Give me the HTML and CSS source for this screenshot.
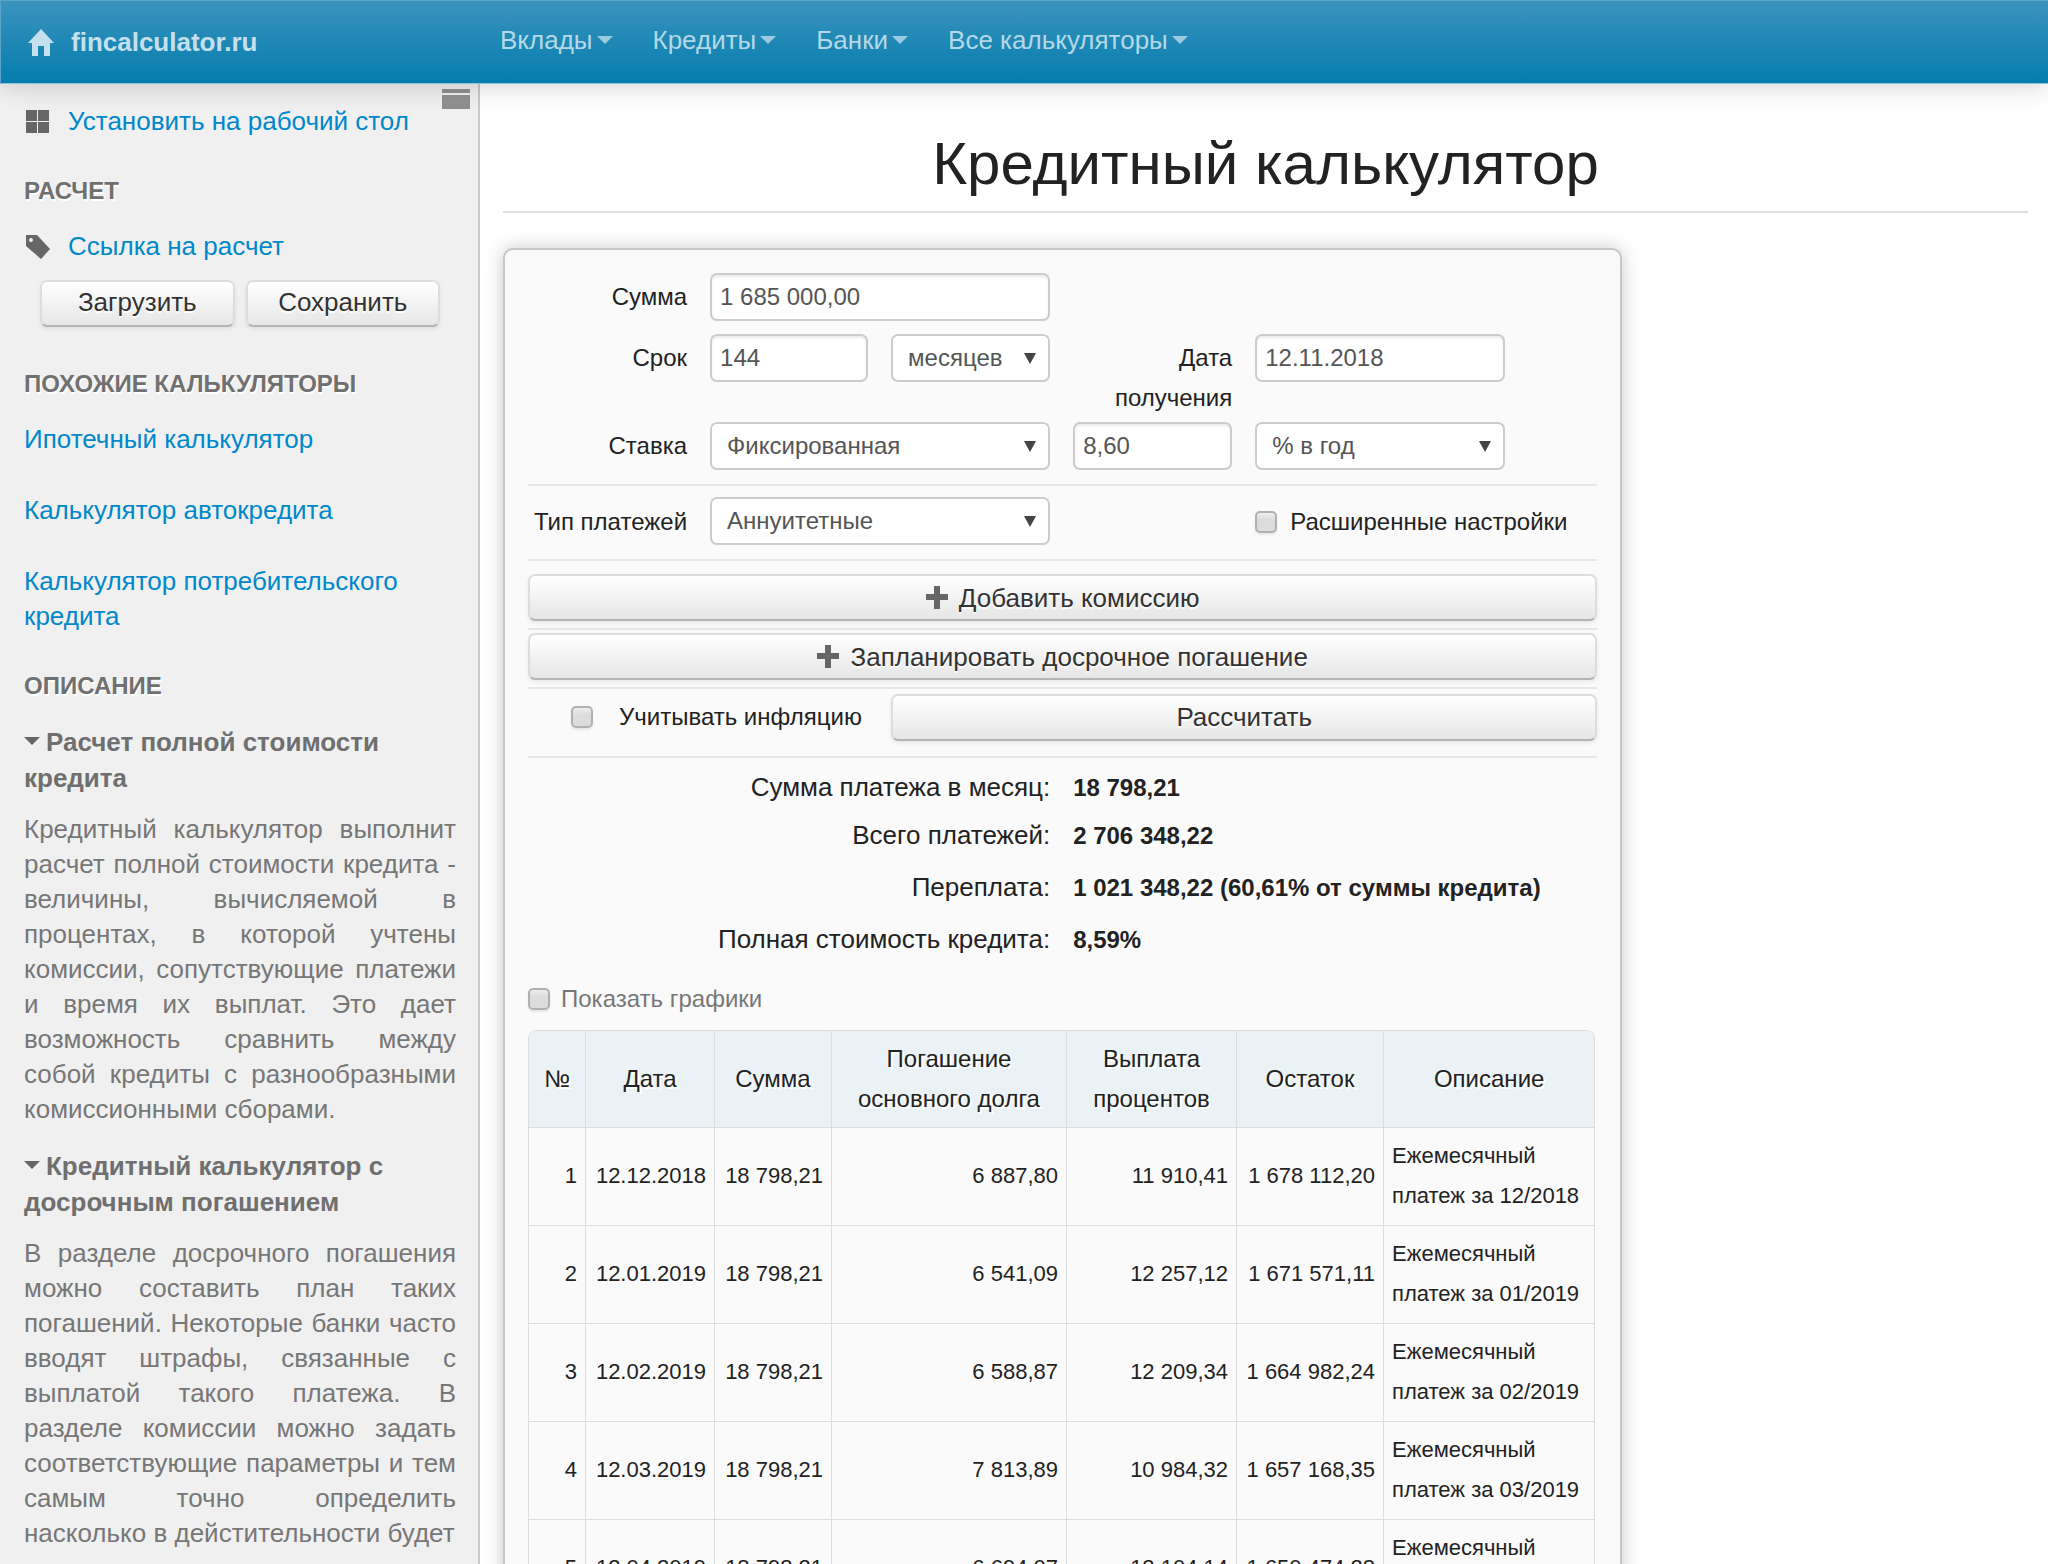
FILE: index.html
```html
<!DOCTYPE html>
<html lang="ru">
<head>
<meta charset="utf-8">
<title>Кредитный калькулятор</title>
<meta name="viewport" content="width=device-width, initial-scale=1">
<link rel="stylesheet" href="styles.css">
</head>
<body>
<header class="navbar">
  <a class="brand" href="#">
    <svg class="brand-icon" viewBox="0 0 26 27" width="26" height="27" aria-hidden="true"><path fill="currentColor" d="M13 0 26 14H22V27H16V17H10V27H4V14H0Z"/></svg>
    <span>fincalculator.ru</span>
  </a>
  <nav class="menu">
    <a class="menu-item" href="#">Вклады</a>
    <a class="menu-item" href="#">Кредиты</a>
    <a class="menu-item" href="#">Банки</a>
    <a class="menu-item" href="#">Все калькуляторы</a>
  </nav>
</header>
<div class="layout">
  <aside class="sidebar">
    <button class="collapse" type="button" aria-label="Свернуть панель">
      <svg viewBox="0 0 28 20" width="28" height="20"><path fill="#909090" d="M0 0H28V4H0ZM0 6H28V20H0Z"/></svg>
    </button>
    <a class="side-link with-icon" href="#">
      <svg class="side-icon" viewBox="0 0 24 24" width="24" height="24" aria-hidden="true"><path fill="#666" d="M0 0H11V11H0ZM12 0H23V11H12ZM0 12H11V23H0ZM12 12H23V23H12Z"/></svg>
      Установить на рабочий стол
    </a>
    <h2 class="side-title">Расчет</h2>
    <a class="side-link with-icon" href="#">
      <svg class="side-icon" viewBox="0 0 24 24" width="24" height="24" aria-hidden="true"><path fill="#666" fill-rule="evenodd" d="M0 0H11L24 14 15 24 0 11ZM5 3A2 2 0 0 0 5 7 2 2 0 0 0 5 3Z"/></svg>
      Ссылка на расчет
    </a>
    <div class="side-buttons">
      <button class="btn" type="button">Загрузить</button>
      <button class="btn" type="button">Сохранить</button>
    </div>
    <h2 class="side-title after-buttons">Похожие калькуляторы</h2>
    <ul class="similar">
      <li><a class="side-link" href="#">Ипотечный калькулятор</a></li>
      <li><a class="side-link" href="#">Калькулятор автокредита</a></li>
      <li><a class="side-link" href="#">Калькулятор потребительского кредита</a></li>
    </ul>
    <h2 class="side-title">Описание</h2>
    <section class="about">
      <h3><svg class="fold" viewBox="0 0 16 9" width="16" height="9" aria-hidden="true"><path fill="#666" d="M0 0H16L8 8Z"/></svg>Расчет полной стоимости кредита</h3>
      <p>Кредитный калькулятор выполнит расчет полной стоимости кредита - величины, вычисляемой в процентах, в которой учтены комиссии, сопутствующие платежи и время их выплат. Это дает возможность сравнить между собой кредиты с разнообразными комиссионными сборами.</p>
    </section>
    <section class="about">
      <h3><svg class="fold" viewBox="0 0 16 9" width="16" height="9" aria-hidden="true"><path fill="#666" d="M0 0H16L8 8Z"/></svg>Кредитный калькулятор с досрочным погашением</h3>
      <p>В разделе досрочного погашения можно составить план таких погашений. Некоторые банки часто вводят штрафы, связанные с выплатой такого платежа. В разделе комиссии можно задать соответствующие параметры и тем самым точно определить насколько в дейстительности будет</p>
    </section>
  </aside>
  <main class="content">
    <h1>Кредитный калькулятор</h1>
    <form class="calc">
      <div class="row">
        <label class="lbl" for="amount">Сумма</label>
        <input class="ctl wide" id="amount" type="text" value="1 685 000,00">
      </div>
      <div class="row">
        <label class="lbl" for="term">Срок</label>
        <input class="ctl" id="term" type="text" value="144">
        <select class="ctl" aria-label="Единица срока"><option>месяцев</option></select>
        <label class="lbl" for="date">Дата получения</label>
        <input class="ctl" id="date" type="text" value="12.11.2018">
      </div>
      <div class="row">
        <label class="lbl" for="ratetype">Ставка</label>
        <select class="ctl wide" id="ratetype"><option>Фиксированная</option></select>
        <input class="ctl" type="text" value="8,60" aria-label="Ставка">
        <select class="ctl" aria-label="Период ставки"><option>% в год</option></select>
      </div>
      <div class="row ruled pay">
        <label class="lbl" for="paytype">Тип платежей</label>
        <select class="ctl wide" id="paytype"><option>Аннуитетные</option></select>
        <label class="check advanced"><input type="checkbox">Расширенные настройки</label>
      </div>
      <div class="ruled first-action">
        <button class="btn block" type="button"><svg viewBox="0 0 22 23" width="22" height="23" aria-hidden="true"><path fill="#666" d="M8 0H14V8H22V14H14V23H8V14H0V8H8Z"/></svg>Добавить комиссию</button>
      </div>
      <div class="ruled action">
        <button class="btn block" type="button"><svg viewBox="0 0 22 23" width="22" height="23" aria-hidden="true"><path fill="#666" d="M8 0H14V8H22V14H14V23H8V14H0V8H8Z"/></svg>Запланировать досрочное погашение</button>
      </div>
      <div class="row ruled submit">
        <label class="check inflation"><input type="checkbox">Учитывать инфляцию</label>
        <button class="btn calculate" type="button">Рассчитать</button>
      </div>
      <dl class="results ruled">
        <div class="row"><dt>Сумма платежа в месяц:</dt><dd>18 798,21</dd></div>
        <div class="row"><dt>Всего платежей:</dt><dd>2 706 348,22</dd></div>
        <div class="row"><dt>Переплата:</dt><dd>1 021 348,22 (60,61% от суммы кредита)</dd></div>
        <div class="row"><dt>Полная стоимость кредита:</dt><dd>8,59%</dd></div>
      </dl>
      <label class="check charts"><input type="checkbox">Показать графики</label>
      <table class="schedule">
        <colgroup><col class="c-num"><col class="c-date"><col class="c-sum"><col class="c-main"><col class="c-int"><col class="c-rest"><col></colgroup>
        <thead>
          <tr><th>№</th><th>Дата</th><th>Сумма</th><th>Погашение основного долга</th><th>Выплата процентов</th><th>Остаток</th><th>Описание</th></tr>
        </thead>
        <tbody>
          <tr><td>1</td><td>12.12.2018</td><td>18 798,21</td><td>6 887,80</td><td>11 910,41</td><td>1 678 112,20</td><td>Ежемесячный платеж за 12/2018</td></tr>
          <tr><td>2</td><td>12.01.2019</td><td>18 798,21</td><td>6 541,09</td><td>12 257,12</td><td>1 671 571,11</td><td>Ежемесячный платеж за 01/2019</td></tr>
          <tr><td>3</td><td>12.02.2019</td><td>18 798,21</td><td>6 588,87</td><td>12 209,34</td><td>1 664 982,24</td><td>Ежемесячный платеж за 02/2019</td></tr>
          <tr><td>4</td><td>12.03.2019</td><td>18 798,21</td><td>7 813,89</td><td>10 984,32</td><td>1 657 168,35</td><td>Ежемесячный платеж за 03/2019</td></tr>
          <tr><td>5</td><td>12.04.2019</td><td>18 798,21</td><td>6 694,07</td><td>12 104,14</td><td>1 650 474,28</td><td>Ежемесячный платеж за 04/2019</td></tr>
        </tbody>
      </table>
    </form>
  </main>
</div>
</body>
</html>
```

FILE: styles.css
```css
:root {
  --sidebar: 480px;
  --line: #e6e6e6;
  --link: #0088cc;
}

* { box-sizing: border-box; }

body {
  margin: 0;
  height: 100vh;
  display: flex;
  flex-direction: column;
  overflow: hidden;
  background: #fff;
  color: #222;
  font-family: "Liberation Sans", Arial, sans-serif;
  font-size: 24px;
  line-height: 40px;
}

a { text-decoration: none; }
h1, h2, h3, p, ul, dl, dd { margin: 0; }
button, input, select { font: inherit; margin: 0; }

/* Top bar */
.navbar {
  position: relative;
  z-index: 2;
  flex: none;
  display: flex;
  height: 84px;
  border: 1px solid #58a5c8;
  border-bottom-color: #8fc3da;
  border-right: 0;
  background: linear-gradient(#3a93bc, #047dae);
  box-shadow: 0 0 26px rgba(0, 0, 0, 0.2);
  font-size: 26px;
}

.brand {
  display: flex;
  align-items: center;
  gap: 17px;
  width: var(--sidebar);
  padding-left: 27px;
  color: #c4e0ec;
  font-weight: bold;
}

.menu {
  display: flex;
  align-items: center;
  gap: 40px;
  padding: 0 0 4px 19px;
}

.menu-item {
  display: flex;
  align-items: center;
  gap: 4px;
  color: #b4d8e7;
}

.menu-item::after {
  content: "";
  border: 8px solid transparent;
  border-top-color: #9bcbe0;
  border-bottom: 0;
}

.layout {
  flex: 1;
  min-height: 0;
  display: flex;
}

/* Sidebar */
.sidebar {
  position: relative;
  flex: none;
  width: var(--sidebar);
  padding: 20px 22px 0 24px;
  overflow: hidden;
  border-right: 2px solid #c8c8c8;
  background: #f0f0f0;
  color: #777;
  line-height: 35px;
}

.collapse {
  position: absolute;
  top: 5px;
  right: 8px;
  display: flex;
  padding: 0;
  border: 0;
  background: none;
}

.side-link {
  color: var(--link);
  font-size: 26px;
}

.with-icon {
  display: flex;
  align-items: center;
  gap: 18px;
  padding-left: 2px;
}

.side-title {
  margin: 34px 0 21px;
  color: #707070;
  font-size: 24px;
  text-transform: uppercase;
  text-shadow: 1px 2px 0 #fff;
}

.side-title.after-buttons { margin-top: 39px; }

.side-buttons {
  display: flex;
  gap: 11px;
  padding: 16px 16px 0;
}

.side-buttons .btn { flex: 1; }

.similar {
  display: flex;
  flex-direction: column;
  gap: 36px;
  padding: 0;
  list-style: none;
}

.similar .side-link { display: block; }

.about h3 {
  color: #6f6f6f;
  font-size: 26px;
  line-height: 36px;
}

.about p {
  margin: 16px 0 21px;
  font-size: 26px;
  text-align: justify;
}

.fold {
  margin-right: 6px;
  vertical-align: 5px;
}

/* Main area */
.content {
  flex: 1;
  min-width: 0;
  padding: 40px 20px 0 23px;
  overflow: hidden;
}

h1 {
  padding-bottom: 7px;
  border-bottom: 2px solid #e0e0e0;
  font-size: 60px;
  font-weight: normal;
  line-height: 80px;
  text-align: center;
}

.calc {
  width: 73.4%;
  margin-top: 35px;
  padding: 23px 23px 24px;
  border: 2px solid #c8c8c8;
  border-radius: 10px;
  background: #fafafa;
  box-shadow: 0 0 18px rgba(0, 0, 0, 0.22);
}

.row {
  display: grid;
  grid-template-columns: 159fr 158fr 159fr 159fr 250fr 69fr;
  column-gap: 23px;
  align-items: start;
}

.lbl {
  padding-top: 4px;
  margin-bottom: 4px;
  text-align: right;
}

.ctl {
  width: 100%;
  height: 48px;
  margin-bottom: 13px;
  padding: 0 8px 1px;
  border: 2px solid #ccc;
  border-radius: 7px;
  outline: 0;
  background: #fff;
  box-shadow: inset 0 2px 2px rgba(0, 0, 0, 0.08);
  color: #555;
}

select.ctl {
  appearance: none;
  padding-left: 15px;
  background: #fff url("data:image/svg+xml,%3Csvg xmlns='http://www.w3.org/2000/svg' width='12' height='11'%3E%3Cpath fill='%23444' d='M0 0H12L6 11Z'/%3E%3C/svg%3E") no-repeat right 12px center;
  box-shadow: none;
}

.wide { grid-column: span 2; }

.ruled { border-top: 2px solid var(--line); }

.pay {
  margin-top: 1px;
  padding: 11px 0 1px;
}

.check {
  display: flex;
  align-items: center;
}

.check input {
  appearance: none;
  flex: none;
  width: 22px;
  height: 22px;
  border: 2px solid #b0b0b0;
  border-radius: 5px;
  background: linear-gradient(#eee, #dcdcdc 40%);
  box-shadow: 0 2px 2px rgba(0, 0, 0, 0.08);
}

.advanced {
  grid-column: 5 / -1;
  gap: 13px;
}

.pay .lbl,
.advanced { padding-top: 5px; }

.btn {
  display: flex;
  align-items: center;
  justify-content: center;
  gap: 11px;
  height: 47px;
  padding: 0 0 2px;
  border: 2px solid #ddd;
  border-bottom-color: #b4b4b4;
  border-radius: 7px;
  background: linear-gradient(#fff, #e6e6e6);
  box-shadow: 0 2px 4px rgba(0, 0, 0, 0.08);
  color: #333;
  font-size: 26px;
  text-shadow: 0 2px 1px #fff;
}

.block {
  width: 100%;
  padding: 0;
}

.first-action { padding: 13px 0 7px; }
.action { padding: 3px 0 7px; }

.submit { padding: 5px 0 15px; }

.inflation {
  grid-column: span 2;
  gap: 26px;
  padding: 3px 0 0 43px;
}

.calculate { grid-column: 3 / -1; }

.results { padding-top: 9px; }

.results .row {
  height: 52px;
  align-items: baseline;
}

.results .row:first-child { height: 48px; }

dt {
  grid-column: span 3;
  font-size: 26px;
  text-align: right;
}

dd {
  grid-column: span 3;
  font-weight: bold;
}

.charts {
  gap: 11px;
  margin: 8px 0 11px;
  color: #777;
}

/* Payment schedule */
.schedule {
  width: calc(100% - 2px);
  table-layout: fixed;
  border-spacing: 0;
  border: 1px solid #ddd;
  border-radius: 8px 8px 0 0;
  overflow: hidden;
  font-size: 22px;
}

.c-num { width: 56px; }
.c-date { width: 129px; }
.c-sum { width: 117px; }
.c-main { width: 235px; }
.c-int { width: 170px; }
.c-rest { width: 147px; }

.schedule th {
  padding: 8px;
  background: #eaf2f6;
  font-size: 24px;
  font-weight: normal;
  text-shadow: 2px 2px 0 #fff;
}

.schedule td {
  padding: 8px 8px 9px;
  border-top: 1px solid #ddd;
  text-align: right;
}

.schedule th + th,
.schedule td + td { border-left: 1px solid #ddd; }

.schedule td:last-child { text-align: left; }
```
